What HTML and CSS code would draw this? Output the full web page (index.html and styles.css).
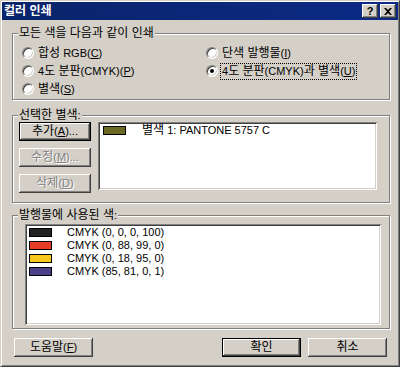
FILE: index.html
```html
<!doctype html>
<html>
    <head>
        <title>컬러 인쇄</title>
        <meta charset="utf-8">
        <link rel="stylesheet" href="styles.css">
    </head>
    <body>
        <section class="window">
            <header class="titlebar">
                <span class="title"><span class="ko">컬러 인쇄</span></span>
                <div class="caption-buttons">
                    <span class="cap-btn">?</span>
                    <span class="cap-btn">
                        <svg width="8" height="7" viewBox="0 0 8 7"><path d="M0 0h2l2 2 2-2h2L5 3.5 8 7H6L4 5 2 7H0l3-3.5z" fill="#000"/></svg>
                    </span>
                </div>
            </header>

            <div class="dialog">
                <section class="group group-print">
                    <div class="legend"><span class="ko">모든 색을 다음과 같이 인쇄</span></div>
                    <div class="radio-grid">
                        <label class="radio"><span class="dot"></span><span class="text"><span class="ko">합성</span> RGB(<u>C</u>)</span></label>
                        <label class="radio"><span class="dot"></span><span class="text"><span class="ko">단색 발행물</span>(<u>I</u>)</span></label>
                        <label class="radio"><span class="dot"></span><span class="text">4<span class="ko">도 분판</span>(CMYK)(<u>P</u>)</span></label>
                        <label class="radio checked"><span class="dot"></span><span class="text focus">4<span class="ko">도 분판</span>(CMYK)<span class="ko">과 별색</span>(<u>U</u>)</span></label>
                        <label class="radio"><span class="dot"></span><span class="text"><span class="ko">별색</span>(<u>S</u>)</span></label>
                    </div>
                </section>

                <section class="group group-spot">
                    <div class="legend"><span class="ko">선택한 별색</span>:</div>
                    <div class="spot-body">
                        <div class="side-buttons">
                            <button class="btn default"><span class="ko">추가</span>(<u>A</u>)...</button>
                            <button class="btn" disabled><span class="ko">수정</span>(<u>M</u>)...</button>
                            <button class="btn" disabled><span class="ko">삭제</span>(<u>D</u>)</button>
                        </div>
                        <div class="listbox spot-list">
                            <div class="item"><span class="swatch" style="background:#6b6a22"></span><span class="ko">별색</span> 1: PANTONE 5757 C</div>
                        </div>
                    </div>
                </section>

                <section class="group group-used">
                    <div class="legend"><span class="ko">발행물에 사용된 색</span>:</div>
                    <div class="listbox used-list">
                        <div class="item"><span class="swatch" style="background:#232323"></span>CMYK (0, 0, 0, 100)</div>
                        <div class="item"><span class="swatch" style="background:#e63b24"></span>CMYK (0, 88, 99, 0)</div>
                        <div class="item"><span class="swatch" style="background:#f8c81f"></span>CMYK (0, 18, 95, 0)</div>
                        <div class="item"><span class="swatch" style="background:#4b3f89"></span>CMYK (85, 81, 0, 1)</div>
                    </div>
                </section>

                <footer class="footer">
                    <button class="btn wide"><span class="ko">도움말</span>(<u>F</u>)</button>
                    <span class="spacer"></span>
                    <button class="btn wide default"><span class="ko">확인</span></button>
                    <button class="btn wide"><span class="ko">취소</span></button>
                </footer>
            </div>
        </section>
    </body>
</html>
```

FILE: styles.css
```css
html, body {
    margin: 0;
    background: #d4d0c8;
    font-size: 11px;
    font-family: "Liberation Sans", "Noto Sans CJK KR", sans-serif;
}

/* hangul runs are set a pixel larger, as in the bitmap system font */
.ko {
    font-size: 12px;
}

.window {
    width: 400px;
    height: 367px;
    box-sizing: border-box;
    background: #d4d0c8;
    border: 1px solid;
    border-color: #d4d0c8 #404040 #404040 #d4d0c8;
    box-shadow: inset 1px 1px #fff, inset -1px -1px #808080;
    padding: 1px;
}

.titlebar {
    display: flex;
    align-items: center;
    height: 18px;
    padding: 0 2px 0 2px;
    background: linear-gradient(to right, #0a246a, #0b2a86);
}

.titlebar .title {
    flex: 1;
    color: #fff;
    font-weight: bold;
    line-height: 18px;
}

.caption-buttons {
    display: flex;
    gap: 2px;
}

.cap-btn {
    display: flex;
    align-items: center;
    justify-content: center;
    width: 16px;
    height: 14px;
    box-sizing: border-box;
    background: #d4d0c8;
    box-shadow: inset -1px -1px #404040, inset 1px 1px #fff, inset -2px -2px #808080;
    font-weight: bold;
    font-size: 11px;
    line-height: 14px;
    color: #000;
}

.dialog {
    padding: 13px 8px 0 10px;
}

/* etched group box */
.group {
    box-sizing: border-box;
    border: 1px solid #808080;
    box-shadow: inset 1px 1px #fff, 1px 1px #fff;
}

.legend {
    display: table;
    height: 14px;
    line-height: 14px;
    margin: -8px 0 0 5px;
    padding: 0 1px;
    background: #d4d0c8;
}

.group-print {
    height: 67px;
    margin-bottom: 15px;
}

.group-spot {
    height: 88px;
    margin-bottom: 12px;
}

.group-used {
    height: 114px;
}

.radio-grid {
    display: grid;
    grid-template-columns: 184px 1fr;
    grid-auto-rows: 18px;
    margin-top: 4px;
    padding-left: 9px;
}

.radio {
    display: flex;
    align-items: center;
}

.radio .dot {
    position: relative;
    width: 12px;
    height: 12px;
    box-sizing: border-box;
    border-radius: 50%;
    background: #fff;
    border: 1px solid;
    border-color: #808080 #fff #fff #808080;
    box-shadow: inset 1px 1px #404040, inset -1px -1px #d4d0c8;
    margin-right: 2px;
}

.radio.checked .dot::after {
    content: "";
    position: absolute;
    left: 3px;
    top: 3px;
    width: 4px;
    height: 4px;
    border-radius: 50%;
    background: #000;
}

.radio .text {
    padding: 0 1px;
    line-height: 15px;
    border: 1px solid transparent;
}

.radio .text.focus {
    border: 1px dotted #000;
}

.spot-body {
    display: flex;
    padding-left: 6px;
}

.side-buttons {
    display: flex;
    flex-direction: column;
    gap: 7px;
    margin-right: 7px;
}

.btn {
    width: 72px;
    height: 19px;
    box-sizing: border-box;
    padding: 0;
    border: 0;
    background: #d4d0c8;
    box-shadow: inset -1px -1px #404040, inset 1px 1px #fff, inset -2px -2px #808080;
    font: inherit;
    color: #000;
    line-height: 17px;
}

.btn.default {
    border: 1px solid #000;
}

.btn:disabled {
    color: #808080;
    text-shadow: 1px 1px #fff;
}

.btn.wide {
    width: 79px;
}

.listbox {
    box-sizing: border-box;
    background: #fff;
    box-shadow: inset 1px 1px #808080, inset -1px -1px #fff, inset 2px 2px #404040, inset -2px -2px #d4d0c8;
    padding: 2px;
}

.spot-list {
    width: 279px;
    height: 68px;
    padding-left: 5px;
}

.used-list {
    width: 356px;
    height: 101px;
    margin: 2px 0 0 12px;
    padding-left: 4px;
}

.item {
    display: flex;
    align-items: center;
    height: 13px;
    line-height: 13px;
    white-space: pre;
}

.swatch {
    width: 23px;
    height: 9px;
    box-sizing: border-box;
    border: 1px solid #000;
    margin-right: 15px;
}

.spot-list .swatch {
    margin-right: 16px;
}

.footer {
    display: flex;
    gap: 7px;
    margin-top: 9px;
    padding: 0 3px 0 2px;
}

.footer .spacer {
    flex: 1;
}
```
